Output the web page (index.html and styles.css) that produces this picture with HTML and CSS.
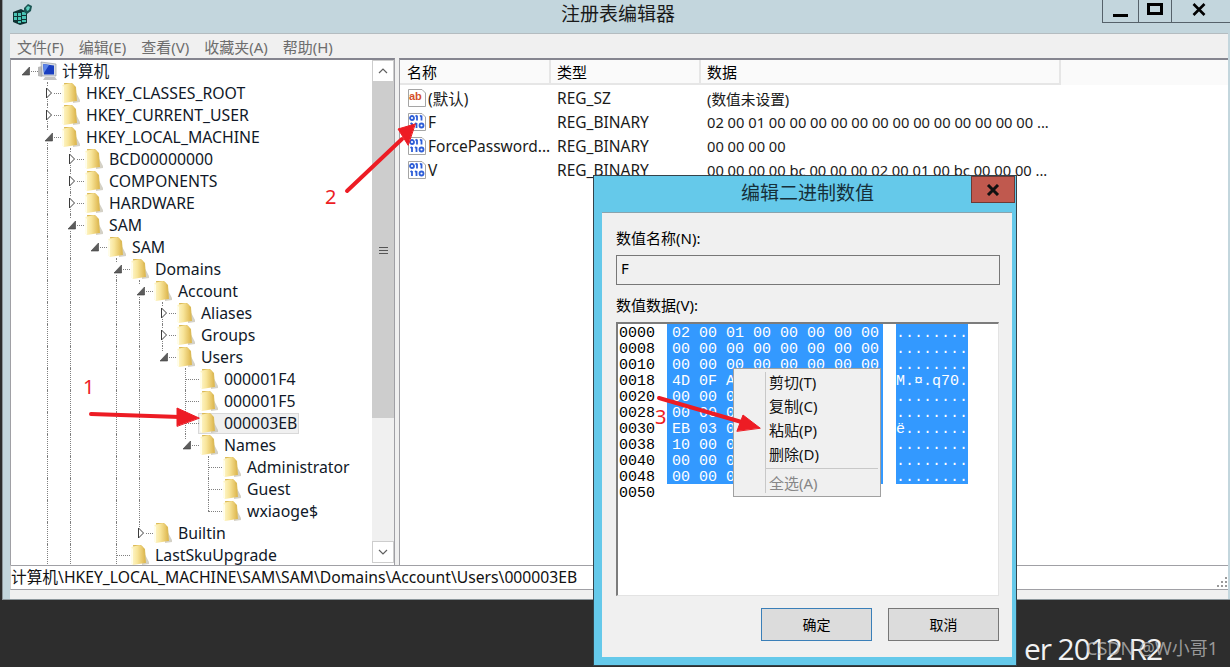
FILE: index.html
```html
<!DOCTYPE html>
<html lang="zh-CN">
<head>
    <meta charset="UTF-8">
    <title>注册表编辑器</title>
    <link rel="stylesheet" href="styles.css">
</head>
<body>

    <!-- shared icons -->
    <svg class="defs" width="0" height="0">
        <defs>
            <linearGradient id="leaf" x1="0" y1="0" x2="1" y2="0">
                <stop offset="0" stop-color="#fff8d0"/>
                <stop offset="0.45" stop-color="#f8e59a"/>
                <stop offset="1" stop-color="#dfb850"/>
            </linearGradient>
            <symbol id="folder" viewBox="0 0 20 22">
                <path d="M12 5 L19 18 L19 20 L12 21 Z" fill="#bdb8a8" opacity="0.65"/>
                <path d="M3 1 L11 1 L15 5 L16 19 L5 19 Z" fill="#dcbb58"/>
                <path d="M1 3 L10 1 L13 3 L15 19 L3 21 L1 19 Z" fill="url(#leaf)"/>
                <path d="M1 3 L1 19 L3 21 L3 5 Z" fill="#fffdea"/>
            </symbol>
            <symbol id="closed" viewBox="0 0 8 12">
                <path d="M1.5 1 L6.5 6 L1.5 11 Z" fill="#fff" stroke="#3c3c3c" stroke-width="1"/>
            </symbol>
            <symbol id="open" viewBox="0 0 8 12">
                <path d="M7.500 2 L7.500 10 L0 10 Z" fill="#5c5c5c" stroke="#3c3c3c" stroke-width="0.6"/>
            </symbol>
            <symbol id="binfile" viewBox="0 0 20 20">
                <path d="M1.5 1.5 L15 1.5 L18.5 5 L18.5 18.5 L1.5 18.5 Z" fill="#fff" stroke="#a5a5a5"/>
                <g fill="none" stroke="#2f5fd8" stroke-width="1.8">
                    <circle cx="5" cy="6" r="2"/>
                    <path d="M10 3.5 V8.5 M14.5 3.5 V8.5 M8.5 4.5 L10 3.5 M13 4.5 L14.5 3.5"/>
                    <path d="M5 11 V16 M9.5 11 V16 M3.5 12 L5 11 M8 12 L9.5 11"/>
                    <circle cx="14.5" cy="13.5" r="2"/>
                </g>
            </symbol>
        </defs>
    </svg>

    <div class="window">
        <div class="titlebar">
            <svg class="app-icon" width="22" height="22" viewBox="0 0 22 22">
                <path d="M1 9 L9 6 L15 9 L15 20 L8 22 L1 19 Z" fill="#0f3434"/>
                <g fill="#49c4b4">
                    <rect x="2" y="10" width="3" height="3"/>
                    <rect x="6" y="10" width="3" height="3"/>
                    <rect x="10" y="9" width="4" height="3"/>
                    <rect x="2" y="14" width="3" height="3"/>
                    <rect x="6" y="14" width="3" height="3"/>
                    <rect x="10" y="13" width="4" height="3"/>
                    <rect x="6" y="18" width="3" height="2"/>
                    <rect x="10" y="17" width="4" height="2"/>
                </g>
                <path d="M12 5 L16 1 L20 3 L19 8 L15 11 L12 9 Z" fill="#1a5552"/>
                <path d="M14 5 L16 3 L18 4 L17 7 L15 8 Z" fill="#5fd0c0"/>
            </svg>
            <div class="title">注册表编辑器</div>
            <div class="caption-btns">
                <div class="cap-btn cap-min"><span class="min-bar"></span></div>
                <div class="cap-btn cap-max"><span class="max-box"></span></div>
                <div class="cap-btn cap-close">
                    <svg width="14" height="13" viewBox="0 0 14 13"><path d="M1.5 1 L12.5 12 M12.5 1 L1.5 12" stroke="#000" stroke-width="2.6"/></svg>
                </div>
            </div>
        </div>

        <div class="client">
            <div class="menubar">
                <span>文件(F)</span>
                <span>编辑(E)</span>
                <span>查看(V)</span>
                <span>收藏夹(A)</span>
                <span>帮助(H)</span>
            </div>

            <div class="panes">
                <div class="tree-pane">
                    <div class="tree">
                        <div class="row">
                            <i class="c h"><svg class="arrow"><use href="#open"/></svg></i>
                            <svg class="pc-icon" width="24" height="20" viewBox="0 0 24 20">
                                <path d="M0 6 L4 5 L4 16 L0 15 Z" fill="#b9b9b9"/>
                                <path d="M3 1 L18 3 L18 15 L4 15 Z" fill="#d8dde2" stroke="#8d9298" stroke-width="0.6"/>
                                <path d="M5 3 L16 4.500 L16 13.500 L6 13.500 Z" fill="#1a3fc0"/>
                                <path d="M5 3 L11 4 L6 12 Z" fill="#5d86e8"/>
                                <path d="M7 16 L17 16 L19 19 L5 19 Z" fill="#c4c4c4"/>
                            </svg>
                            <span class="label">计算机</span>
                        </div>

                        <div class="row"><i class="c"></i><i class="c t"><svg class="arrow"><use href="#closed"/></svg></i><svg class="ico"><use href="#folder"/></svg><span class="label">HKEY_CLASSES_ROOT</span></div>
                        <div class="row"><i class="c"></i><i class="c t"><svg class="arrow"><use href="#closed"/></svg></i><svg class="ico"><use href="#folder"/></svg><span class="label">HKEY_CURRENT_USER</span></div>
                        <div class="row"><i class="c"></i><i class="c t"><svg class="arrow"><use href="#open"/></svg></i><svg class="ico"><use href="#folder"/></svg><span class="label">HKEY_LOCAL_MACHINE</span></div>

                        <div class="row"><i class="c"></i><i class="c v"></i><i class="c t"><svg class="arrow"><use href="#closed"/></svg></i><svg class="ico"><use href="#folder"/></svg><span class="label">BCD00000000</span></div>
                        <div class="row"><i class="c"></i><i class="c v"></i><i class="c t"><svg class="arrow"><use href="#closed"/></svg></i><svg class="ico"><use href="#folder"/></svg><span class="label">COMPONENTS</span></div>
                        <div class="row"><i class="c"></i><i class="c v"></i><i class="c t"><svg class="arrow"><use href="#closed"/></svg></i><svg class="ico"><use href="#folder"/></svg><span class="label">HARDWARE</span></div>
                        <div class="row"><i class="c"></i><i class="c v"></i><i class="c t"><svg class="arrow"><use href="#open"/></svg></i><svg class="ico"><use href="#folder"/></svg><span class="label">SAM</span></div>

                        <div class="row"><i class="c"></i><i class="c v"></i><i class="c v"></i><i class="c h"><svg class="arrow"><use href="#open"/></svg></i><svg class="ico"><use href="#folder"/></svg><span class="label">SAM</span></div>
                        <div class="row"><i class="c"></i><i class="c v"></i><i class="c v"></i><i class="c"></i><i class="c t"><svg class="arrow"><use href="#open"/></svg></i><svg class="ico"><use href="#folder"/></svg><span class="label">Domains</span></div>
                        <div class="row"><i class="c"></i><i class="c v"></i><i class="c v"></i><i class="c"></i><i class="c v"></i><i class="c t"><svg class="arrow"><use href="#open"/></svg></i><svg class="ico"><use href="#folder"/></svg><span class="label">Account</span></div>

                        <div class="row"><i class="c"></i><i class="c v"></i><i class="c v"></i><i class="c"></i><i class="c v"></i><i class="c v"></i><i class="c t"><svg class="arrow"><use href="#closed"/></svg></i><svg class="ico"><use href="#folder"/></svg><span class="label">Aliases</span></div>
                        <div class="row"><i class="c"></i><i class="c v"></i><i class="c v"></i><i class="c"></i><i class="c v"></i><i class="c v"></i><i class="c t"><svg class="arrow"><use href="#closed"/></svg></i><svg class="ico"><use href="#folder"/></svg><span class="label">Groups</span></div>
                        <div class="row"><i class="c"></i><i class="c v"></i><i class="c v"></i><i class="c"></i><i class="c v"></i><i class="c v"></i><i class="c l"><svg class="arrow"><use href="#open"/></svg></i><svg class="ico"><use href="#folder"/></svg><span class="label">Users</span></div>

                        <div class="row"><i class="c"></i><i class="c v"></i><i class="c v"></i><i class="c"></i><i class="c v"></i><i class="c v"></i><i class="c"></i><i class="c t"></i><svg class="ico"><use href="#folder"/></svg><span class="label">000001F4</span></div>
                        <div class="row"><i class="c"></i><i class="c v"></i><i class="c v"></i><i class="c"></i><i class="c v"></i><i class="c v"></i><i class="c"></i><i class="c t"></i><svg class="ico"><use href="#folder"/></svg><span class="label">000001F5</span></div>
                        <div class="row"><i class="c"></i><i class="c v"></i><i class="c v"></i><i class="c"></i><i class="c v"></i><i class="c v"></i><i class="c"></i><i class="c t"></i><span class="selected"><svg class="ico"><use href="#folder"/></svg><span class="label">000003EB</span></span></div>
                        <div class="row"><i class="c"></i><i class="c v"></i><i class="c v"></i><i class="c"></i><i class="c v"></i><i class="c v"></i><i class="c"></i><i class="c l"><svg class="arrow"><use href="#open"/></svg></i><svg class="ico"><use href="#folder"/></svg><span class="label">Names</span></div>

                        <div class="row"><i class="c"></i><i class="c v"></i><i class="c v"></i><i class="c"></i><i class="c v"></i><i class="c v"></i><i class="c"></i><i class="c"></i><i class="c t"></i><svg class="ico"><use href="#folder"/></svg><span class="label">Administrator</span></div>
                        <div class="row"><i class="c"></i><i class="c v"></i><i class="c v"></i><i class="c"></i><i class="c v"></i><i class="c v"></i><i class="c"></i><i class="c"></i><i class="c t"></i><svg class="ico"><use href="#folder"/></svg><span class="label">Guest</span></div>
                        <div class="row"><i class="c"></i><i class="c v"></i><i class="c v"></i><i class="c"></i><i class="c v"></i><i class="c v"></i><i class="c"></i><i class="c"></i><i class="c l"></i><svg class="ico"><use href="#folder"/></svg><span class="label">wxiaoge$</span></div>

                        <div class="row"><i class="c"></i><i class="c v"></i><i class="c v"></i><i class="c"></i><i class="c v"></i><i class="c l"><svg class="arrow"><use href="#closed"/></svg></i><svg class="ico"><use href="#folder"/></svg><span class="label">Builtin</span></div>
                        <div class="row"><i class="c"></i><i class="c v"></i><i class="c v"></i><i class="c"></i><i class="c t"></i><svg class="ico"><use href="#folder"/></svg><span class="label">LastSkuUpgrade</span></div>
                    </div>

                    <div class="scrollbar">
                        <div class="sb-btn">
                            <svg width="10" height="6" viewBox="0 0 10 6"><path d="M1 5 L5 1 L9 5" fill="none" stroke="#606060" stroke-width="1.2"/></svg>
                        </div>
                        <div class="sb-thumb"><span class="grip"></span></div>
                        <div class="sb-track"></div>
                        <div class="sb-btn">
                            <svg width="10" height="6" viewBox="0 0 10 6"><path d="M1 1 L5 5 L9 1" fill="none" stroke="#606060" stroke-width="1.2"/></svg>
                        </div>
                    </div>
                </div>

                <div class="list-pane">
                    <div class="list-head">
                        <div class="col-name">名称</div>
                        <div class="col-type">类型</div>
                        <div class="col-data">数据</div>
                    </div>
                    <div class="list-row">
                        <div class="col-name">
                            <svg class="file-icon" viewBox="0 0 20 20">
                                <path d="M1.500 1.500 L15 1.500 L18.500 5 L18.500 18.500 L1.500 18.500 Z" fill="#fff" stroke="#a5a5a5"/>
                                <text class="ab" x="2" y="12">ab</text>
                            </svg>(默认)
                        </div>
                        <div class="col-type">REG_SZ</div>
                        <div class="col-data">(数值未设置)</div>
                    </div>
                    <div class="list-row">
                        <div class="col-name"><svg class="file-icon"><use href="#binfile"/></svg>F</div>
                        <div class="col-type">REG_BINARY</div>
                        <div class="col-data">02 00 01 00 00 00 00 00 00 00 00 00 00 00 00 00 ...</div>
                    </div>
                    <div class="list-row">
                        <div class="col-name"><svg class="file-icon"><use href="#binfile"/></svg>ForcePassword...</div>
                        <div class="col-type">REG_BINARY</div>
                        <div class="col-data">00 00 00 00</div>
                    </div>
                    <div class="list-row">
                        <div class="col-name"><svg class="file-icon"><use href="#binfile"/></svg>V</div>
                        <div class="col-type">REG_BINARY</div>
                        <div class="col-data">00 00 00 00 bc 00 00 00 02 00 01 00 bc 00 00 00 ...</div>
                    </div>
                </div>
            </div>

            <div class="statusbar">
                <span>计算机\HKEY_LOCAL_MACHINE\SAM\SAM\Domains\Account\Users\000003EB</span>
                <svg class="size-grip" width="12" height="12" viewBox="0 0 12 12">
                    <g fill="#9a9a9a">
                        <rect x="9" y="0" width="2" height="2"/>
                        <rect x="5" y="4" width="2" height="2"/>
                        <rect x="9" y="4" width="2" height="2"/>
                        <rect x="1" y="8" width="2" height="2"/>
                        <rect x="5" y="8" width="2" height="2"/>
                        <rect x="9" y="8" width="2" height="2"/>
                    </g>
                </svg>
            </div>
        </div>
    </div>

    <div class="desktop">
        <span class="server-name">er 2012 R2</span>
        <span class="watermark">CSDN @W小哥1</span>
    </div>

    <!-- edit binary value dialog -->
    <div class="dialog">
        <div class="dlg-title">
            <span>编辑二进制数值</span>
            <div class="dlg-close">
                <svg width="14" height="12" viewBox="0 0 14 12"><path d="M2 1 L12 11 M12 1 L2 11" stroke="#111" stroke-width="3"/></svg>
            </div>
        </div>
        <div class="dlg-body">
            <div class="dlg-label">数值名称(N):</div>
            <div class="name-input">F</div>
            <div class="dlg-label dlg-label-data">数值数据(V):</div>
            <div class="hex-box">
                <div class="offsets">
                    <div>0000</div><div>0008</div><div>0010</div><div>0018</div><div>0020</div><div>0028</div>
                    <div>0030</div><div>0038</div><div>0040</div><div>0048</div><div>0050</div>
                </div>
                <div class="hex">
                    <div>02 00 01 00 00 00 00 00</div>
                    <div>00 00 00 00 00 00 00 00</div>
                    <div>00 00 00 00 00 00 00 00</div>
                    <div>4D 0F A</div>
                    <div>00 00 0</div>
                    <div>00 00 0</div>
                    <div>EB 03 0</div>
                    <div>10 00 0</div>
                    <div>00 00 0</div>
                    <div>00 00 0</div>
                </div>
                <div class="ascii">
                    <div>........</div><div>........</div><div>........</div><div>M.¤.q70.</div><div>........</div>
                    <div>........</div><div>ë.......</div><div>........</div><div>........</div><div>........</div>
                </div>
            </div>
            <div class="dlg-buttons">
                <div class="btn btn-default">确定</div>
                <div class="btn">取消</div>
            </div>
        </div>
    </div>

    <div class="context-menu">
        <div class="menu-item">剪切(T)</div>
        <div class="menu-item">复制(C)</div>
        <div class="menu-item">粘贴(P)</div>
        <div class="menu-item">删除(D)</div>
        <div class="menu-sep"></div>
        <div class="menu-item disabled">全选(A)</div>
    </div>

    <!-- red annotations drawn on top of the screenshot -->
    <svg class="notes" width="1230" height="667" viewBox="0 0 1230 667">
        <g fill="#ed1c24" stroke="#ed1c24" stroke-linecap="round">
            <path d="M91 414 L180 417" stroke-width="4" fill="none"/>
            <path d="M199 418 L177 408 L177 426 Z" stroke-width="1"/>
            <path d="M347 191 L402 139" stroke-width="4" fill="none"/>
            <path d="M415 124 L398 129 L408 145 Z" stroke-width="1"/>
            <path d="M659 398 L745 423" stroke-width="4" fill="none"/>
            <path d="M760 428 L743 415 L737 431 Z" stroke-width="1"/>
        </g>
        <g class="note-nums">
            <text x="83" y="394">1</text>
            <text x="325" y="204">2</text>
            <text x="655" y="424">3</text>
        </g>
    </svg>

</body>
</html>
```

FILE: styles.css
```css
* {
    box-sizing: border-box;
}
html, body {
    margin: 0;
    height: 667px;
    overflow: hidden;
}
body {
    position: relative;
    background-color: #2d2d2d;
    font-family: "Noto Sans", "Noto Sans CJK SC", sans-serif;
    font-size: 15px;
    color: #000;
}
.defs {
    position: absolute;
}

/* main window */
.window {
    margin-left: 2px;
    height: 600px;
    background-color: #c3d6dd;
    border-left: 1px solid #8d979c;
    border-bottom: 1px solid #8d979c;
    display: flex;
    flex-direction: column;
}
.titlebar {
    height: 33px;
    display: flex;
    position: relative;
    justify-content: center;
}
.app-icon {
    position: absolute;
    left: 9px;
    top: 3px;
}
.title {
    font-size: 19px;
    line-height: 28px;
    margin-left: 3px;
    color: #1a1a1a;
}
.caption-btns {
    position: absolute;
    right: 0;
    top: 0;
    height: 23px;
    display: flex;
    border-left: 1px solid #56626a;
    border-bottom: 1px solid #56626a;
}
.cap-btn {
    display: flex;
    align-items: center;
    justify-content: center;
}
.cap-min {
    width: 36px;
    border-right: 1px solid #56626a;
}
.min-bar {
    width: 15px;
    height: 3px;
    background-color: #000;
    margin-top: 8px;
}
.cap-max {
    width: 33px;
    border-right: 1px solid #56626a;
}
.max-box {
    width: 16px;
    height: 12px;
    border: 3px solid #000;
    margin-top: -4px;
}
.cap-close {
    width: 58px;
    padding-bottom: 4px;
    padding-right: 4px;
}
.client {
    margin: 0 2px 0 7px;
    flex: 1;
    display: flex;
    flex-direction: column;
    background-color: #f0f0f0;
}
.menubar {
    height: 25px;
    display: flex;
    gap: 15px;
    padding-left: 7px;
    align-items: center;
    color: #6d6d6d;
    font-size: 15px;
    border-top: 1px solid #b4bcc0;
}
.panes {
    height: 507px;
    display: flex;
    justify-content: space-between;
}

/* registry tree */
.tree-pane {
    width: 385px;
    display: flex;
    background-color: #fff;
    border-top: 2px solid #85858f;
    border-left: 1px solid #a0a0a5;
    border-right: 1px solid #a0a0a5;
    overflow: hidden;
}
.tree {
    flex: 1;
    padding-left: 4px;
    overflow: hidden;
}
.row {
    height: 22px;
    display: flex;
    align-items: center;
    white-space: nowrap;
    font-size: 15.8px;
    color: #101828;
}
.row .label {
    line-height: 22px;
}
.c {
    display: block;
    position: relative;
    flex: none;
    width: 23px;
    height: 22px;
}
.c.v::before, .c.t::before, .c.l::before {
    content: "";
    position: absolute;
    left: 9px;
    top: 0;
    bottom: 0;
    border-left: 1px dotted #808080;
}
.c.l::before {
    bottom: 11px;
}
.c.t::after, .c.l::after, .c.h::after {
    content: "";
    position: absolute;
    left: 9px;
    right: 0;
    top: 11px;
    border-top: 1px dotted #808080;
}
.arrow {
    position: absolute;
    left: 7px;
    top: 5px;
    width: 8px;
    height: 12px;
    background-color: #fff;
    z-index: 1;
}
.pc-icon {
    flex: none;
}
.ico {
    flex: none;
    width: 20px;
    height: 22px;
    margin: 0 5px 0 0;
}
.selected {
    display: flex;
    align-items: center;
    height: 21px;
    margin-left: -1px;
    padding: 0 1px 0 0;
    background-color: #f0f0f0;
    border: 1px solid #d9d9d9;
}
.scrollbar {
    width: 22px;
    flex: none;
    display: flex;
    flex-direction: column;
    background-color: #f0f0f0;
    margin-bottom: 2px;
}
.sb-btn {
    height: 22px;
    flex: none;
    display: flex;
    align-items: center;
    justify-content: center;
    background-color: #fff;
    border: 1px solid #cdcdcd;
}
.sb-thumb {
    height: 336px;
    flex: none;
    background-color: #cdcdcd;
    display: flex;
    align-items: center;
    justify-content: center;
}
.grip {
    width: 9px;
    height: 7px;
    border-top: 1px solid #555;
    border-bottom: 1px solid #555;
    background: linear-gradient(#555, #555) center / 100% 1px no-repeat;
}
.sb-track {
    flex: 1;
}

/* values list */
.list-pane {
    width: 829px;
    background-color: #fff;
    border-top: 2px solid #85858f;
    border-left: 1px solid #a0a0a5;
}
.list-head {
    height: 25px;
    display: flex;
    align-items: center;
    background-color: #fafafa;
    font-size: 15px;
}
.list-head > div {
    height: 25px;
    line-height: 24px;
    border-right: 2px solid #e6e6e6;
    border-bottom: 2px solid #e6e6e6;
}
.col-name {
    width: 151px;
    padding-left: 7px;
    display: flex;
    align-items: center;
    white-space: nowrap;
    flex: none;
}
.col-type {
    width: 150px;
    padding-left: 6px;
    flex: none;
}
.col-data {
    width: 360px;
    padding-left: 6px;
    flex: none;
    white-space: nowrap;
}
.list-row {
    height: 24px;
    display: flex;
    align-items: center;
    color: #1a1a1a;
    font-size: 15.5px;
}
.list-row .col-data {
    font-size: 14.7px;
}
.list-row:nth-child(2) {
    margin-top: 1px;
}
.file-icon {
    width: 20px;
    height: 20px;
    flex: none;
    margin-right: 1px;
}
.ab {
    font-family: "Liberation Sans", sans-serif;
    font-size: 11px;
    font-weight: bold;
    fill: #d4502c;
}
.statusbar {
    height: 25px;
    display: flex;
    justify-content: space-between;
    padding-left: 0;
    background-color: #fff;
    border-top: 1px solid #a0a0a5;
    border-bottom: 1px solid #a0a0a5;
    border-left: 1px solid #d0d0d0;
    font-size: 15.7px;
    line-height: 23px;
    color: #111;
    white-space: nowrap;
}
.size-grip {
    flex: none;
    margin-top: 11px;
}

/* desktop behind the window */
.desktop {
    height: 67px;
}
.server-name {
    position: absolute;
    left: 1024px;
    top: 630px;
    font-size: 30px;
    line-height: 37px;
    color: #f2f2f2;
    font-family: "Open Sans", sans-serif;
    letter-spacing: -1.1px;
    white-space: nowrap;
}
.watermark {
    position: absolute;
    left: 1086px;
    top: 635px;
    font-size: 18px;
    line-height: 26px;
    color: rgba(190, 190, 190, 0.75);
    white-space: nowrap;
}

/* dialog */
.dialog {
    position: absolute;
    left: 593px;
    top: 175px;
    width: 424px;
    height: 491px;
    background-color: #65c9ea;
    border: 1px solid #33434b;
    padding: 0 3px 8px 8px;
    display: flex;
    flex-direction: column;
}
.dlg-title {
    height: 36px;
    flex: none;
    display: flex;
    justify-content: center;
    position: relative;
    font-size: 19px;
    line-height: 35px;
    color: #16303a;
}
.dlg-close {
    position: absolute;
    right: -2px;
    top: 0;
    width: 44px;
    height: 27px;
    background-color: #c0594e;
    border: 1px solid #6b3a36;
    display: flex;
    align-items: center;
    justify-content: center;
}
.dlg-body {
    flex: 1;
    background-color: #f0f0f0;
    border-top: 1px solid #8aa3ad;
    padding: 15px 14px 0 14px;
    margin-right: 1px;
}
.dlg-label {
    font-size: 15px;
    line-height: 20px;
}
.dlg-label-data {
    margin-top: 10px;
}
.name-input {
    margin-top: 7px;
    height: 30px;
    width: 384px;
    padding-left: 4px;
    line-height: 25px;
    font-size: 15px;
    border: 1px solid #777;
}
.hex-box {
    margin-top: 7px;
    width: 383px;
    height: 274px;
    display: flex;
    align-items: flex-start;
    background-color: #fff;
    border-style: solid;
    border-width: 2px 1px 1px 2px;
    border-color: #7c7c7c #e3e3e3 #e3e3e3 #7c7c7c;
    color: #000;
    font-family: "Liberation Mono", monospace;
    font-size: 15px;
    line-height: 16px;
}
.offsets {
    width: 49px;
    padding: 2px 0 0 1px;
}
.hex {
    width: 216px;
    height: 160px;
    padding: 2px 0 0 5px;
    background-color: #3399ff;
    color: #fff;
}
.ascii {
    width: 72px;
    height: 160px;
    padding-top: 2px;
    margin-left: 13px;
    background-color: #3399ff;
    color: #fff;
}
.dlg-buttons {
    margin-top: 12px;
    display: flex;
    gap: 16px;
    justify-content: flex-end;
    width: 383px;
}
.btn {
    width: 111px;
    height: 33px;
    background-color: #dcdcdc;
    border: 1px solid #777;
    text-align: center;
    font-size: 14px;
    line-height: 31px;
}
.btn-default {
    border-color: #3a7fb8;
}

/* context menu over the hex box */
.context-menu {
    position: absolute;
    left: 733px;
    top: 368px;
    width: 148px;
    height: 129px;
    padding: 1px 2px 3px 31px;
    background-color: #f0f0f0;
    border: 1px solid #a0a0a0;
    font-size: 15px;
    color: #111;
}
.context-menu::before {
    content: "";
    position: absolute;
    left: 31px;
    top: 3px;
    bottom: 3px;
    border-left: 1px solid #c8c8c8;
}
.menu-item {
    height: 24px;
    line-height: 24px;
    padding-left: 4px;
}
.menu-sep {
    height: 1px;
    margin: 2px 0 2px 0;
    background-color: #c8c8c8;
}
.disabled {
    color: #868686;
}

.notes {
    position: absolute;
    left: 0;
    top: 0;
}
.note-nums text {
    font-family: "Noto Sans", sans-serif;
    font-size: 20px;
    fill: #ed1c24;
}
```
